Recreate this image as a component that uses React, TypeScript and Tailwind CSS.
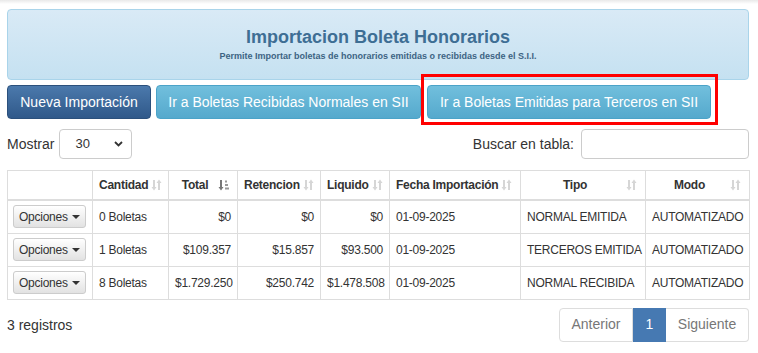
import React from "react";

type Row = {
  cantidad: string;
  total: string;
  retencion: string;
  liquido: string;
  fecha: string;
  tipo: string;
  modo: string;
};

const rows: Row[] = [
  { cantidad: "0 Boletas", total: "$0", retencion: "$0", liquido: "$0", fecha: "01-09-2025", tipo: "NORMAL EMITIDA", modo: "AUTOMATIZADO" },
  { cantidad: "1 Boletas", total: "$109.357", retencion: "$15.857", liquido: "$93.500", fecha: "01-09-2025", tipo: "TERCEROS EMITIDA", modo: "AUTOMATIZADO" },
  { cantidad: "8 Boletas", total: "$1.729.250", retencion: "$250.742", liquido: "$1.478.508", fecha: "01-09-2025", tipo: "NORMAL RECIBIDA", modo: "AUTOMATIZADO" },
];

const SortIcon = ({ active }: { active?: boolean }) => {
  if (active) {
    return (
      <svg width="11" height="12" viewBox="0 0 11 12" className="shrink-0">
        <path d="M3 1v8" stroke="#777" strokeWidth="2" />
        <path d="M0.5 8h5L3 11.5z" fill="#777" />
        <rect x="7" y="1.5" width="2" height="2" fill="#999" />
        <rect x="7" y="5" width="3" height="2" fill="#999" />
        <rect x="7" y="8.5" width="4" height="2" fill="#999" />
      </svg>
    );
  }
  return (
    <svg width="11" height="12" viewBox="0 0 11 12" className="shrink-0">
      <path d="M3 1v8" stroke="#d6d6d6" strokeWidth="2" />
      <path d="M0.5 8h5L3 11.5z" fill="#d6d6d6" />
      <path d="M8 11V3" stroke="#d6d6d6" strokeWidth="2" />
      <path d="M5.5 4h5L8 0.5z" fill="#d6d6d6" />
    </svg>
  );
};

const Th = ({ label, active, center }: { label: string; active?: boolean; center?: boolean }) => (
  <th className="border border-[#ddd] border-b-2 px-[6px] py-[5px] font-bold">
    <div className="flex items-center">
      <span className={center ? "flex-1 text-center whitespace-nowrap" : "flex-1 text-left whitespace-nowrap"}>{label}</span>
      <span className="ml-[3px] mr-[2px]">
        <SortIcon active={active} />
      </span>
    </div>
  </th>
);

const Caret = () => (
  <svg width="8" height="4" viewBox="0 0 8 4" className="ml-[4px]">
    <path d="M0 0h8L4 4z" fill="#333" />
  </svg>
);

const App = () => {
  return (
    <div className="min-h-[353px] bg-white text-[#333]" style={{ fontFamily: '"Liberation Sans", Arial, sans-serif' }}>
      <div className="h-[4px] bg-gradient-to-b from-[#e9e9e9] to-white" />
      <div className="ml-[7px] w-[742px]">
        <div className="mt-[5px] h-[71px] rounded-[4px] border border-[#a9d4ea] bg-gradient-to-b from-[#d9eaf6] to-[#c5e1f1] flex flex-col items-center pt-[15px]">
          <h1 className="text-[18px] font-bold leading-[24px] text-[#3e6e94]">Importacion Boleta Honorarios</h1>
          <p className="mt-[2px] text-[9px] font-bold leading-[11px] text-[#3d6383]">
            Permite Importar boletas de honorarios emitidas o recibidas desde el S.I.I.
          </p>
        </div>

        <div className="mt-[5px] flex gap-[5px] text-[14px]">
          <button className="h-[34px] w-[144px] rounded-[4px] border border-[#2b507c] bg-gradient-to-b from-[#4b79ac] to-[#30598a] text-white">
            Nueva Importación
          </button>
          <button className="h-[34px] w-[265px] rounded-[4px] border border-[#4ba3c8] bg-gradient-to-b from-[#71bfdd] to-[#55a9cd] text-white">
            Ir a Boletas Recibidas Normales en SII
          </button>
          <div className="relative ml-[1px]">
            <button className="h-[34px] w-[284px] rounded-[4px] border border-[#4ba3c8] bg-gradient-to-b from-[#71bfdd] to-[#55a9cd] text-white">
              Ir a Boletas Emitidas para Terceros en SII
            </button>
            <span className="pointer-events-none absolute -left-[6px] -right-[7px] -top-[11px] -bottom-[6px] border-[3px] border-[#f00]" />
          </div>
        </div>

        <div className="mt-[10px] flex items-center justify-between text-[14px]">
          <div className="flex items-center">
            <span>Mostrar</span>
            <div className="ml-[5px] flex h-[30px] w-[73px] items-center justify-between rounded-[4px] border border-[#ccc] pl-[15px] pr-[8px] text-[13px]">
              <span>30</span>
              <svg width="9" height="6" viewBox="0 0 9 6">
                <path d="M1 1l3.5 3.5L8 1" stroke="#333" strokeWidth="1.8" fill="none" />
              </svg>
            </div>
          </div>
          <div className="flex items-center">
            <span>Buscar en tabla:</span>
            <div className="ml-[7px] h-[30px] w-[168px] rounded-[4px] border border-[#ccc]" />
          </div>
        </div>

        <table className="mt-[11px] w-[742px] table-fixed border-collapse text-[12px] tracking-[-0.25px]">
          <colgroup>
            <col className="w-[85px]" />
            <col className="w-[76px]" />
            <col className="w-[69px]" />
            <col className="w-[83px]" />
            <col className="w-[69px]" />
            <col className="w-[131px]" />
            <col className="w-[125px]" />
            <col className="w-[104px]" />
          </colgroup>
          <thead>
            <tr className="h-[29px]">
              <th className="border border-[#ddd] border-b-2" />
              <Th label="Cantidad" />
              <Th label="Total" active center />
              <Th label="Retencion" />
              <Th label="Liquido" />
              <Th label="Fecha Importación" />
              <Th label="Tipo" center />
              <Th label="Modo" center />
            </tr>
          </thead>
          <tbody>
            {rows.map((row: Row) => (
              <tr key={row.tipo} className="h-[33px]">
                <td className="border border-[#ddd] px-[5px]">
                  <button className="flex h-[23px] items-center rounded-[3px] border border-[#ccc] bg-gradient-to-b from-white to-[#e2e2e2] pl-[5px] pr-[5px] text-[12px] text-[#333]">
                    Opciones
                    <Caret />
                  </button>
                </td>
                <td className="border border-[#ddd] px-[6px]">{row.cantidad}</td>
                <td className="border border-[#ddd] px-[6px] text-right">{row.total}</td>
                <td className="border border-[#ddd] px-[6px] text-right">{row.retencion}</td>
                <td className="border border-[#ddd] px-[6px] text-right">{row.liquido}</td>
                <td className="border border-[#ddd] px-[6px]">{row.fecha}</td>
                <td className="border border-[#ddd] px-[6px] whitespace-nowrap">{row.tipo}</td>
                <td className="border border-[#ddd] px-[6px] whitespace-nowrap">{row.modo}</td>
              </tr>
            ))}
          </tbody>
        </table>

        <div className="mt-[8px] flex items-center justify-between text-[14px]">
          <span className="mt-[1px]">3 registros</span>
          <div className="flex h-[34px]">
            <span className="flex w-[74px] items-center justify-center rounded-l-[4px] border border-[#ddd] text-[#777]">Anterior</span>
            <span className="flex w-[33px] items-center justify-center border border-[#4679b2] bg-[#4679b2] text-white">1</span>
            <span className="flex w-[83px] items-center justify-center rounded-r-[4px] border border-l-0 border-[#ddd] text-[#777]">Siguiente</span>
          </div>
        </div>
      </div>
    </div>
  );
};

export default App;
